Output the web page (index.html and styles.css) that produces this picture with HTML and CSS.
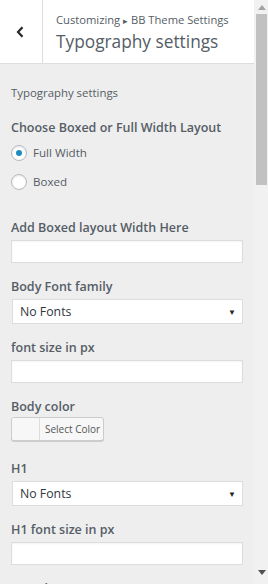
FILE: index.html
```html
<!DOCTYPE html>
<html lang="en">
<head>
<meta charset="utf-8">
<title>Typography settings</title>
<link rel="stylesheet" href="styles.css">
</head>
<body>
<div class="frame">
<div class="panel">
  <header class="head">
    <button class="back" aria-label="Back">
      <svg width="8" height="12" viewBox="0 0 8 12"><path d="M6.5 1.2 L2 6 L6.5 10.8" fill="none" stroke="#23282d" stroke-width="2.2"/></svg>
    </button>
    <div class="titles">
      <div class="crumb">Customizing <span class="arrow">&#9656;</span> BB Theme Settings</div>
      <div class="title">Typography settings</div>
    </div>
  </header>
  <ul class="controls">
    <li class="desc">Typography settings</li>
    <li class="control radios">
      <span class="label">Choose Boxed or Full Width Layout</span>
      <label class="radio"><span class="dot checked"></span>Full Width</label>
      <label class="radio"><span class="dot"></span>Boxed</label>
    </li>
    <li class="control">
      <span class="label">Add Boxed layout Width Here</span>
      <div class="input"></div>
    </li>
    <li class="control">
      <span class="label">Body Font family</span>
      <div class="select">No Fonts<span class="caret">&#9660;</span></div>
    </li>
    <li class="control">
      <span class="label">font size in px</span>
      <div class="input"></div>
    </li>
    <li class="control color">
      <span class="label">Body color</span>
      <div class="colorbtn"><span class="swatch"></span><span class="ctext">Select Color</span></div>
    </li>
    <li class="control">
      <span class="label">H1</span>
      <div class="select">No Fonts<span class="caret">&#9660;</span></div>
    </li>
    <li class="control">
      <span class="label">H1 font size in px</span>
      <div class="input"></div>
    </li>
    <li class="control color">
      <span class="label">H1 color</span>
      <div class="colorbtn"><span class="swatch"></span><span class="ctext">Select Color</span></div>
    </li>
  </ul>
</div>
<div class="scrollbar" aria-hidden="true">
  <div class="sb-btn"><svg width="8" height="5" viewBox="0 0 8 5"><path d="M4 0 L8 5 L0 5 Z" fill="#a3a3a3"/></svg></div>
  <div class="sb-track"><div class="sb-thumb"></div></div>
  <div class="sb-btn down"><svg width="8" height="5" viewBox="0 0 8 5"><path d="M0 0 L8 0 L4 5 Z" fill="#505050"/></svg></div>
</div>
</div>
</body>
</html>
```

FILE: styles.css
```css
html, body {
  margin: 0;
  padding: 0;
  height: 100%;
  overflow: hidden;
  background: #eeeeee;
  font-family: "Open Sans", "Noto Sans", sans-serif;
  color: #555d66;
}
.frame {
  display: flex;
  width: 268px;
  height: 584px;
}
.panel {
  flex: 1;
  height: 584px;
  overflow: hidden;
  background: #eeeeee;
}
.scrollbar {
  width: 14px;
  flex: none;
  background: #f1f1f1;
  display: flex;
  flex-direction: column;
}
.sb-btn {
  height: 14px;
  display: flex;
  align-items: center;
  justify-content: center;
  padding-left: 1px;
}
.sb-btn.down { height: 15px; align-items: flex-start; padding-top: 1px; box-sizing: border-box; }
.sb-track {
  flex: 1;
  padding: 0 1px 0 2px;
}
.sb-thumb {
  height: 171px;
  background: #c1c1c1;
}
.head {
  display: flex;
  height: 63px;
  background: #fff;
  border-bottom: 1px solid #dddddd;
}
.back {
  width: 43px;
  flex: none;
  border: 0;
  border-right: 1px solid #dddddd;
  background: #fff;
  padding: 0;
  display: flex;
  align-items: center;
  justify-content: center;
}
.back svg { margin-right: 3px; }
.titles {
  padding: 11px 0 0 13px;
}
.crumb {
  font-size: 11.2px;
  line-height: 17px;
  color: #555d66;
  white-space: nowrap;
}
.arrow { font-size: 9px; }
.title {
  font-size: 17.3px;
  line-height: 26px;
  font-weight: 400;
  color: #555d66;
  white-space: nowrap;
}
.controls {
  list-style: none;
  margin: 0;
  padding: 20px 12px 20px 11px;
}
.desc {
  font-size: 11.4px;
  line-height: 18px;
  margin-bottom: 15px;
}
.control {
  margin-bottom: 13px;
}
.label {
  display: block;
  font-size: 12.5px;
  font-weight: 600;
  line-height: 21px;
  margin-bottom: 2px;
  color: #555d66;
  white-space: nowrap;
}
.radios .label { margin-bottom: 0; }
.control.radios { margin-bottom: 21px; }
.radio {
  display: flex;
  align-items: center;
  gap: 6px;
  font-size: 11.6px;
  height: 29px;
  color: #555d66;
}
.dot {
  width: 14px;
  height: 14px;
  border: 1px solid #b4b9be;
  border-radius: 50%;
  background: #fff;
  box-shadow: inset 0 1px 2px rgba(0,0,0,0.1);
  display: flex;
  align-items: center;
  justify-content: center;
}
.dot.checked::after {
  content: "";
  width: 6px;
  height: 6px;
  border-radius: 50%;
  background: #1e8cbe;
}
.input {
  height: 21px;
  width: 230px;
  border: 1px solid #dddddd;
  background: #fff;
  box-shadow: inset 0 1px 2px rgba(0,0,0,0.05);
}
.select {
  position: relative;
  height: 23px;
  margin: 1px 0 0 1px;
  border: 1px solid #dddddd;
  background: #fff;
  font-size: 12.3px;
  line-height: 23px;
  padding-left: 7px;
  width: 222px;
  color: #32373c;
}
.caret {
  position: absolute;
  right: 6px;
  top: 0;
  font-size: 8px;
  color: #23282d;
}
.colorbtn {
  display: flex;
  width: 91px;
  height: 22px;
  border: 1px solid #cccccc;
  border-radius: 3px;
  box-shadow: 0 1px 0 #cccccc;
  background: #f7f7f7;
  overflow: hidden;
}
.swatch {
  width: 27px;
  flex: none;
  border-right: 1px solid #dddddd;
  background: #f7f7f7;
}
.ctext {
  font-size: 10px;
  line-height: 22px;
  padding-left: 5px;
  color: #555555;
  white-space: nowrap;
}
.control.color { margin-bottom: 17px; }
.control.color .label { margin-bottom: 0; }
```
